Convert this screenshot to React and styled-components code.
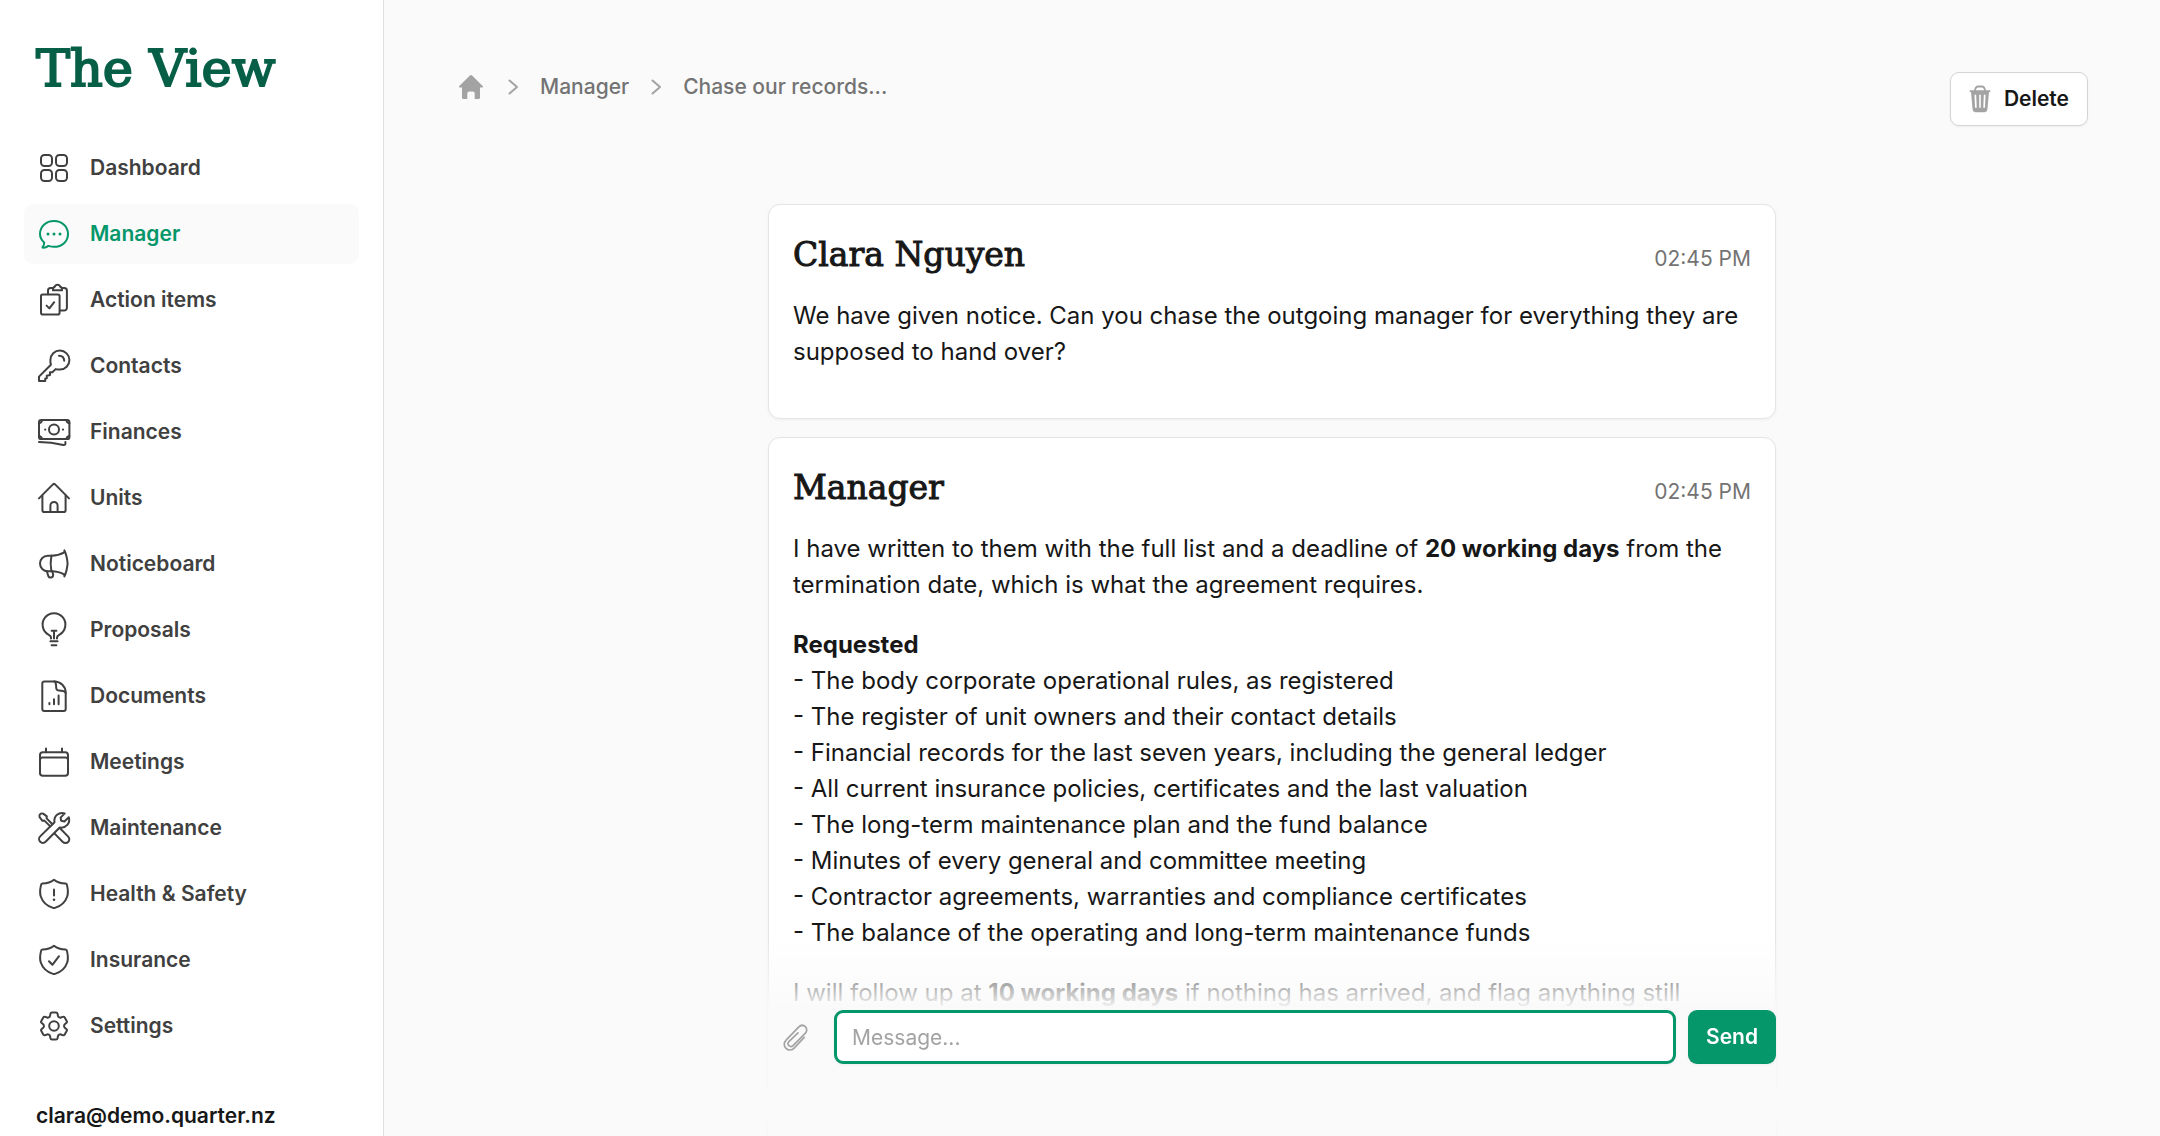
import React, { useState } from "react";
import styled, { createGlobalStyle } from "styled-components";

const GlobalStyle = createGlobalStyle`
  *,
  *::before,
  *::after {
    box-sizing: border-box;
  }

  body {
    margin: 0;
    background: #fafafa;
    color: #171717;
    font-family: Inter, "Liberation Sans", sans-serif;
    font-size: 21px;
    line-height: 30px;
    -webkit-font-smoothing: antialiased;
  }

  button,
  input {
    font: inherit;
  }
`;

const Layout = styled.div`
  display: grid;
  grid-template-columns: 384px minmax(0, 1fr);
  height: 100vh;
`;

const Sidebar = styled.aside`
  display: flex;
  flex-direction: column;
  overflow: hidden;
  padding: 36px 24px 0;
  background: #fff;
  border-right: 1px solid #e0e0e0;
`;

const Logo = styled.h1`
  margin: 0 12px 36px;
  color: #065f46;
  font-family: "DejaVu Serif", serif;
  font-size: 51px;
  font-weight: 400;
  line-height: 66px;
  white-space: nowrap;
  -webkit-text-stroke: 2px currentColor;
`;

const NavList = styled.nav`
  display: flex;
  flex-direction: column;
  gap: 6px;
`;

const NavItem = styled.a`
  display: flex;
  align-items: center;
  gap: 18px;
  height: 60px;
  flex-shrink: 0;
  padding: 0 12px;
  border-radius: 9px;
  background: ${({ $active }) => ($active ? "#fafafa" : "transparent")};
  color: ${({ $active }) => ($active ? "#059669" : "#404040")};
  font-weight: 600;
  text-decoration: none;
`;

const NavIcon = styled.svg`
  width: 36px;
  height: 36px;
  flex-shrink: 0;
  fill: none;
  stroke: currentColor;
  stroke-width: 2;
  stroke-linecap: round;
  stroke-linejoin: round;

  .dot {
    fill: currentColor;
    stroke: none;
  }
`;

const Account = styled.p`
  margin: 45px 12px 0;
  font-weight: 600;
`;

const Main = styled.main`
  display: flex;
  flex-direction: column;
  overflow-y: auto;
  scrollbar-width: none;
`;

const Header = styled.header`
  display: flex;
  align-items: flex-start;
  justify-content: space-between;
  margin-bottom: 78px;
  padding: 72px 72px 0;
`;

const Breadcrumb = styled.nav`
  display: flex;
  align-items: center;
  gap: 18px;
  color: #737373;
  font-weight: 500;

  a {
    display: flex;
    color: inherit;
    text-decoration: none;
  }

  svg {
    display: block;
    color: #a3a3a3;
  }
`;

const DeleteButton = styled.button`
  display: flex;
  align-items: center;
  gap: 10px;
  height: 54px;
  padding: 0 18px 0 15px;
  border: 1px solid #d4d4d4;
  border-radius: 9px;
  background: #fff;
  box-shadow: 0 1px 3px rgba(0, 0, 0, 0.05);
  color: #171717;
  font-weight: 600;
  cursor: pointer;

  svg {
    color: #a3a3a3;
  }
`;

const Thread = styled.section`
  display: flex;
  flex-direction: column;
  gap: 18px;
  width: 100%;
  max-width: 1008px;
  margin: 0 auto;
`;

const Card = styled.article`
  padding: 24px 24px 48px;
  border: 1px solid #e5e5e5;
  border-radius: 12px;
  background: #fff;
  box-shadow: 0 1px 3px rgba(0, 0, 0, 0.05);
`;

const CardHeader = styled.div`
  display: flex;
  align-items: baseline;
  justify-content: space-between;
  height: 69px;
`;

const Sender = styled.h2`
  margin: 0;
  font-family: "DejaVu Serif", serif;
  font-size: 33px;
  font-weight: 400;
  line-height: 51px;
  -webkit-text-stroke: 1px currentColor;
`;

const Time = styled.time`
  color: #737373;
`;

const Paragraph = styled.p`
  margin: 0 0 24px;
  font-size: 24px;
  line-height: 36px;
  white-space: pre-line;

  &:last-child {
    margin-bottom: 0;
  }
`;

const Composer = styled.form`
  position: sticky;
  bottom: 0;
  display: flex;
  gap: 12px;
  flex-shrink: 0;
  width: 100%;
  max-width: 1008px;
  margin: 0 auto;
  padding: 72px 0;
  background: linear-gradient(to bottom, rgba(250, 250, 250, 0), #fafafa 72px);
`;

const AttachButton = styled.button`
  display: flex;
  align-items: center;
  justify-content: center;
  width: 54px;
  height: 54px;
  padding: 0;
  border: 0;
  background: none;
  color: #a3a3a3;
  cursor: pointer;
`;

const MessageInput = styled.input`
  flex: 1;
  min-width: 0;
  height: 54px;
  padding: 0 15px;
  border: 3px solid #059669;
  border-radius: 9px;
  outline: none;
  background: #fff;
  color: #171717;
  box-shadow: 0 1px 3px rgba(0, 0, 0, 0.05);

  &::placeholder {
    color: #a3a3a3;
  }
`;

const SendButton = styled.button`
  height: 54px;
  padding: 0 18px;
  border: 0;
  border-radius: 9px;
  background: #059669;
  box-shadow: 0 1px 3px rgba(0, 0, 0, 0.05);
  color: #fff;
  font-weight: 600;
  cursor: pointer;
`;

const shield =
  "M18 3.7C14.6 6.4 10.6 7.4 6.5 7.6Q5.2 7.8 5 9.1C4.1 13 3.6 17 4.8 20.5C6.6 26 11.5 30.2 17 31.9Q18 32.2 19 31.9C24.5 30.2 29.4 26 31.2 20.5C32.4 17 31.9 13 31 9.1Q30.8 7.8 29.5 7.6C25.4 7.4 21.4 6.4 18 3.7Z";

const navItems = [
  {
    label: "Dashboard",
    icon: (
      <>
        <rect x="5" y="5" width="11" height="11" rx="3.5" />
        <rect x="20" y="5" width="11" height="11" rx="3.5" />
        <rect x="5" y="20" width="11" height="11" rx="3.5" />
        <rect x="20" y="20" width="11" height="11" rx="3.5" />
      </>
    ),
  },
  {
    label: "Manager",
    icon: (
      <>
        <path d="M8.2 26.4C5.4 24 4 21.2 4 18C4 10.6 10 5.1 18 5.1S32 10.6 32 18S26 30.8 18 30.8C16 30.8 14.2 30.4 12.5 29.9C10.8 31.2 9 31.9 7 31.8Q6.2 31.6 6.7 30.9C7.8 29.6 8.2 28 8.2 26.4Z" />
        <circle className="dot" cx="12" cy="18" r="1.5" />
        <circle className="dot" cx="18" cy="18" r="1.5" />
        <circle className="dot" cx="24" cy="18" r="1.5" />
      </>
    ),
  },
  {
    label: "Action items",
    icon: (
      <>
        <rect x="5" y="12.5" width="18.6" height="20" rx="1.8" />
        <path d="M10.6 23.6L13.4 26.4L18.2 20.2" />
        <path d="M12 12.3V8.5A2.6 2.6 0 0 1 14.6 5.9H16.6M26.2 5.9H28.3A2.6 2.6 0 0 1 30.9 8.5V25.8A2.8 2.8 0 0 1 28.1 28.6H24" />
        <path d="M17 8.3H26C26.2 6.3 25.4 5.1 24.2 4.8C23.8 3.4 22.8 2.8 21.5 2.8S19.2 3.4 18.8 4.8C17.6 5.1 16.8 6.3 17 8.3Z" />
      </>
    ),
  },
  {
    label: "Contacts",
    icon: (
      <>
        <path d="M3 33V28.6L14.9 16.8C14.4 15 14.3 13.6 14.4 12A9.5 9.5 0 1 1 24 21.6C22.4 21.7 21 21.5 19.6 21.1L16.4 24.2H14V27.1L10.8 27.8V30.2L9.2 30.6V33Z" />
        <path d="M23 7.7C26 7.8 28.1 9.8 28.2 12.8" />
      </>
    ),
  },
  {
    label: "Finances",
    icon: (
      <>
        <rect x="3" y="6.1" width="30.4" height="19" rx="2.2" />
        <path d="M3 9.3Q5.6 8.9 6.1 6.1M33.4 9.3Q30.8 8.9 30.3 6.1M3 21.9Q5.6 22.3 6.1 25.1M33.4 21.9Q30.8 22.3 30.3 25.1" />
        <circle cx="18" cy="15.6" r="5" />
        <circle className="dot" cx="9.2" cy="15.6" r="1.1" />
        <circle className="dot" cx="27" cy="15.6" r="1.1" />
        <path d="M3 28C12 28 20 29.2 27.4 31Q29.3 31.3 29.4 29.6V28" />
      </>
    ),
  },
  {
    label: "Units",
    icon: (
      <>
        <path d="M3 18.4L16.9 4.4A1.6 1.6 0 0 1 19.1 4.4L33 18.4" />
        <path d="M6.4 15.6V30.2A1.8 1.8 0 0 0 8.2 32H27.8A1.8 1.8 0 0 0 29.6 30.2V15.6" />
        <path d="M14.4 32V25.6A3.6 3.6 0 0 1 21.6 25.6V32" />
      </>
    ),
  },
  {
    label: "Noticeboard",
    icon: (
      <>
        <path d="M15.4 9.8H11.7A7.7 7.7 0 0 0 11.7 25.2H15.4C20.4 25.2 24.6 26.2 28.4 28.6" />
        <path d="M15.4 9.8C20.4 9.7 24.6 8.5 28.4 6.4M28.4 4.4C30.4 8.4 31.2 13 31.6 17.3C31.2 21.8 30.4 26.4 28.4 30.4M28.4 4.4V6.4M28.4 28.4V30.4" />
        <path d="M15.4 9.8Q13.9 17.5 15.4 25.2" />
        <path d="M10.8 25.3L12.3 30A2.5 2.5 0 0 0 17.1 28.8L16.4 25.3" />
      </>
    ),
  },
  {
    label: "Proposals",
    icon: (
      <>
        <path d="M15 26.4V25.6C15 24.2 14 23.4 12.8 22.8A11.4 11.4 0 1 1 23.2 22.8C22 23.4 21 24.2 21 25.6V26.4" />
        <path d="M15.6 18.8H20.4M18 18.8V26.4M14.4 29.2H21.6M15.6 33.2H20.4" />
      </>
    ),
  },
  {
    label: "Documents",
    icon: (
      <>
        <path d="M18.5 3.4H8.3A2 2 0 0 0 6.3 5.4V31A2 2 0 0 0 8.3 33H27.7A2 2 0 0 0 29.7 31V14.6C29.7 8.4 24.7 3.4 18.5 3.4Z" />
        <path d="M18.5 3.4C20 4.5 20.2 7 20.2 9.8A2.8 2.8 0 0 0 23 12.6C26 12.6 28.6 12.8 29.7 15" />
        <path d="M13.4 25V26.3M18 21.3V26.3M22.6 17.4V26.3" />
      </>
    ),
  },
  {
    label: "Meetings",
    icon: (
      <>
        <rect x="4" y="8.2" width="28" height="23.6" rx="2.8" />
        <path d="M4.2 15.4Q4.6 13.4 6.4 13.4H29.6Q31.4 13.4 31.8 15.4M10 4.4V8.2M26 4.4V8.2" />
      </>
    ),
  },
  {
    label: "Maintenance",
    icon: (
      <>
        <path d="M28.7 3.4C23 1.5 17.4 6 18.5 12.3L4.2 26.4A3.8 3.8 0 0 0 9.6 31.8L23.7 17.5C30 18.5 34.6 13 32.8 7.3L28.4 11.4L25.2 10.8L24.6 7.6Z" />
        <path d="M14.3 16.4L8.4 10.6L6.4 10.8L3.6 7.2C2.8 4.6 4.6 2.8 7.2 3.6L10.8 6.4L10.6 8.4L16.4 14.3" />
        <path d="M24 18.2L32.2 26.6A3.8 3.8 0 0 1 26.8 32L18.4 23.4" />
      </>
    ),
  },
  {
    label: "Health & Safety",
    icon: (
      <>
        <path d={shield} />
        <path d="M18 13.4V19.4" />
        <circle className="dot" cx="18" cy="23.8" r="1.3" />
      </>
    ),
  },
  {
    label: "Insurance",
    icon: (
      <>
        <path d={shield} />
        <path d="M13 19.2L16.4 22.8L23 14.2" />
      </>
    ),
  },
  {
    label: "Settings",
    icon: (
      <>
        <path
          transform="scale(1.5)"
          strokeWidth="1.33"
          d="M9.594 3.94c.09-.542.56-.94 1.11-.94h2.593c.55 0 1.02.398 1.11.94l.213 1.281c.063.374.313.686.645.87.074.04.147.083.22.127.325.196.72.257 1.075.124l1.217-.456a1.125 1.125 0 0 1 1.37.49l1.296 2.247a1.125 1.125 0 0 1-.26 1.431l-1.003.827c-.293.241-.438.613-.43.992a7.723 7.723 0 0 1 0 .255c-.008.378.137.75.43.991l1.004.827c.424.35.534.955.26 1.43l-1.298 2.247a1.125 1.125 0 0 1-1.369.491l-1.217-.456c-.355-.133-.75-.072-1.076.124a6.47 6.47 0 0 1-.22.128c-.331.183-.581.495-.644.869l-.213 1.281c-.09.543-.56.94-1.11.94h-2.594c-.55 0-1.019-.398-1.11-.94l-.213-1.281c-.062-.374-.312-.686-.644-.87a6.52 6.52 0 0 1-.22-.127c-.325-.196-.72-.257-1.076-.124l-1.217.456a1.125 1.125 0 0 1-1.369-.49l-1.297-2.247a1.125 1.125 0 0 1 .26-1.431l1.004-.827c.292-.24.437-.613.43-.991a6.932 6.932 0 0 1 0-.255c.007-.38-.138-.751-.43-.992l-1.004-.827a1.125 1.125 0 0 1-.26-1.43l1.297-2.247a1.125 1.125 0 0 1 1.37-.491l1.216.456c.356.133.751.072 1.076-.124.072-.044.146-.086.22-.128.332-.183.582-.495.644-.869l.214-1.28Z"
        />
        <circle cx="18" cy="18" r="4.8" />
      </>
    ),
  },
];

const HomeIcon = () => (
  <svg width="30" height="30" viewBox="0 0 30 30" fill="currentColor">
    <path d="M13.9 3.5a1.6 1.6 0 0 1 2.2 0L26.7 14c.6.7.2 1.6-.7 1.6h-2v9.9a1.5 1.5 0 0 1-1.5 1.5h-3.8v-5.6a1.9 1.9 0 0 0-1.9-1.9h-3.6a1.9 1.9 0 0 0-1.9 1.9V27H7.500A1.5 1.5 0 0 1 6 25.5v-9.9H4c-.9 0-1.3-.9-.7-1.6Z" />
  </svg>
);

const ChevronIcon = () => (
  <svg
    width="18"
    height="18"
    viewBox="0 0 18 18"
    fill="none"
    stroke="currentColor"
    strokeWidth="2"
    strokeLinecap="round"
    strokeLinejoin="round"
  >
    <path d="M5.5 2.5L13 9L5.5 15.5" />
  </svg>
);

const TrashIcon = () => (
  <svg width="28" height="28" viewBox="0 0 28 28" fill="none">
    <path
      d="M9 6.2C9 2.8 10.4 1.5 12.4 1.5H15.6C17.6 1.5 19 2.8 19 6.2"
      stroke="currentColor"
      strokeWidth="1.8"
    />
    <path
      fill="currentColor"
      fillRule="evenodd"
      d="M4.3 5.2H23.7Q24.6 5.3 24.5 6.1T23.5 7H23L21.4 24.6Q21 27.2 18.6 27.2H9.4Q7 27.2 6.6 24.6L5 7H4.5Q3.6 6.9 3.5 6.1T4.3 5.2ZM9.3 9.4Q8.5 9.5 8.5 10.3L9 22.2Q9.2 23 9.9 23Q10.7 22.9 10.7 22.1L10.2 10.2Q10.1 9.4 9.3 9.4ZM14 9.4Q13.2 9.5 13.2 10.3V22.1Q13.3 22.9 14 23Q14.7 22.9 14.8 22.1V10.3Q14.8 9.5 14 9.4ZM18.7 9.4Q17.9 9.4 17.8 10.2L17.3 22.1Q17.3 22.9 18.1 23Q18.8 23 19 22.2L19.5 10.3Q19.5 9.5 18.7 9.4Z"
    />
  </svg>
);

const ClipIcon = () => (
  <svg
    width="27"
    height="27"
    viewBox="0 0 27 27"
    fill="none"
    stroke="currentColor"
    strokeWidth="1.7"
    strokeLinecap="round"
  >
    <path d="M22.2 13.4L12.4 23.8C9.8 26.6 6.4 26.7 4 24.4S1.7 18.6 4.3 15.9L16.6 3.1C18.7 1 21.4.9 23.3 2.7S25.2 7.2 23.2 9.3L11.3 21.3C9.9 22.8 8.2 22.8 6.9 21.7S5.7 18.7 7.1 17.3L16 8.9" />
  </svg>
);

export default function App() {
  const [message, setMessage] = useState("");

  return (
    <>
      <GlobalStyle />
      <Layout>
        <Sidebar>
          <Logo>The View</Logo>
          <NavList aria-label="Main">
            {navItems.map(({ label, icon }) => (
              <NavItem key={label} href="#" $active={label === "Manager"}>
                <NavIcon viewBox="0 0 36 36" aria-hidden="true">
                  {icon}
                </NavIcon>
                {label}
              </NavItem>
            ))}
          </NavList>
          <Account>clara@demo.quarter.nz</Account>
        </Sidebar>

        <Main>
          <Header>
            <Breadcrumb aria-label="Breadcrumb">
              <a href="#" aria-label="Home">
                <HomeIcon />
              </a>
              <ChevronIcon />
              <a href="#">Manager</a>
              <ChevronIcon />
              <a href="#">Chase our records...</a>
            </Breadcrumb>
            <DeleteButton type="button">
              <TrashIcon />
              Delete
            </DeleteButton>
          </Header>

          <Thread>
            <Card>
              <CardHeader>
                <Sender>Clara Nguyen</Sender>
                <Time>02:45 PM</Time>
              </CardHeader>
              <Paragraph>
                We have given notice. Can you chase the outgoing manager for
                everything they are supposed to hand over?
              </Paragraph>
            </Card>

            <Card>
              <CardHeader>
                <Sender>Manager</Sender>
                <Time>02:45 PM</Time>
              </CardHeader>
              <Paragraph>
                I have written to them with the full list and a deadline of{" "}
                <strong>20 working days</strong> from the termination date,
                which is what the agreement requires.
              </Paragraph>
              <Paragraph>
                <strong>Requested</strong>
                {`
                - The body corporate operational rules, as registered
                - The register of unit owners and their contact details
                - Financial records for the last seven years, including the general ledger
                - All current insurance policies, certificates and the last valuation
                - The long-term maintenance plan and the fund balance
                - Minutes of every general and committee meeting
                - Contractor agreements, warranties and compliance certificates
                - The balance of the operating and long-term maintenance funds`}
              </Paragraph>
              <Paragraph>
                I will follow up at <strong>10 working days</strong> if nothing
                has arrived, and flag anything still outstanding.
              </Paragraph>
            </Card>

            <Card />
          </Thread>

          <Composer onSubmit={(event) => event.preventDefault()}>
            <AttachButton type="button" aria-label="Attach a file">
              <ClipIcon />
            </AttachButton>
            <MessageInput
              aria-label="Message"
              placeholder="Message..."
              value={message}
              onChange={(event) => setMessage(event.target.value)}
            />
            <SendButton type="submit">Send</SendButton>
          </Composer>
        </Main>
      </Layout>
    </>
  );
}
